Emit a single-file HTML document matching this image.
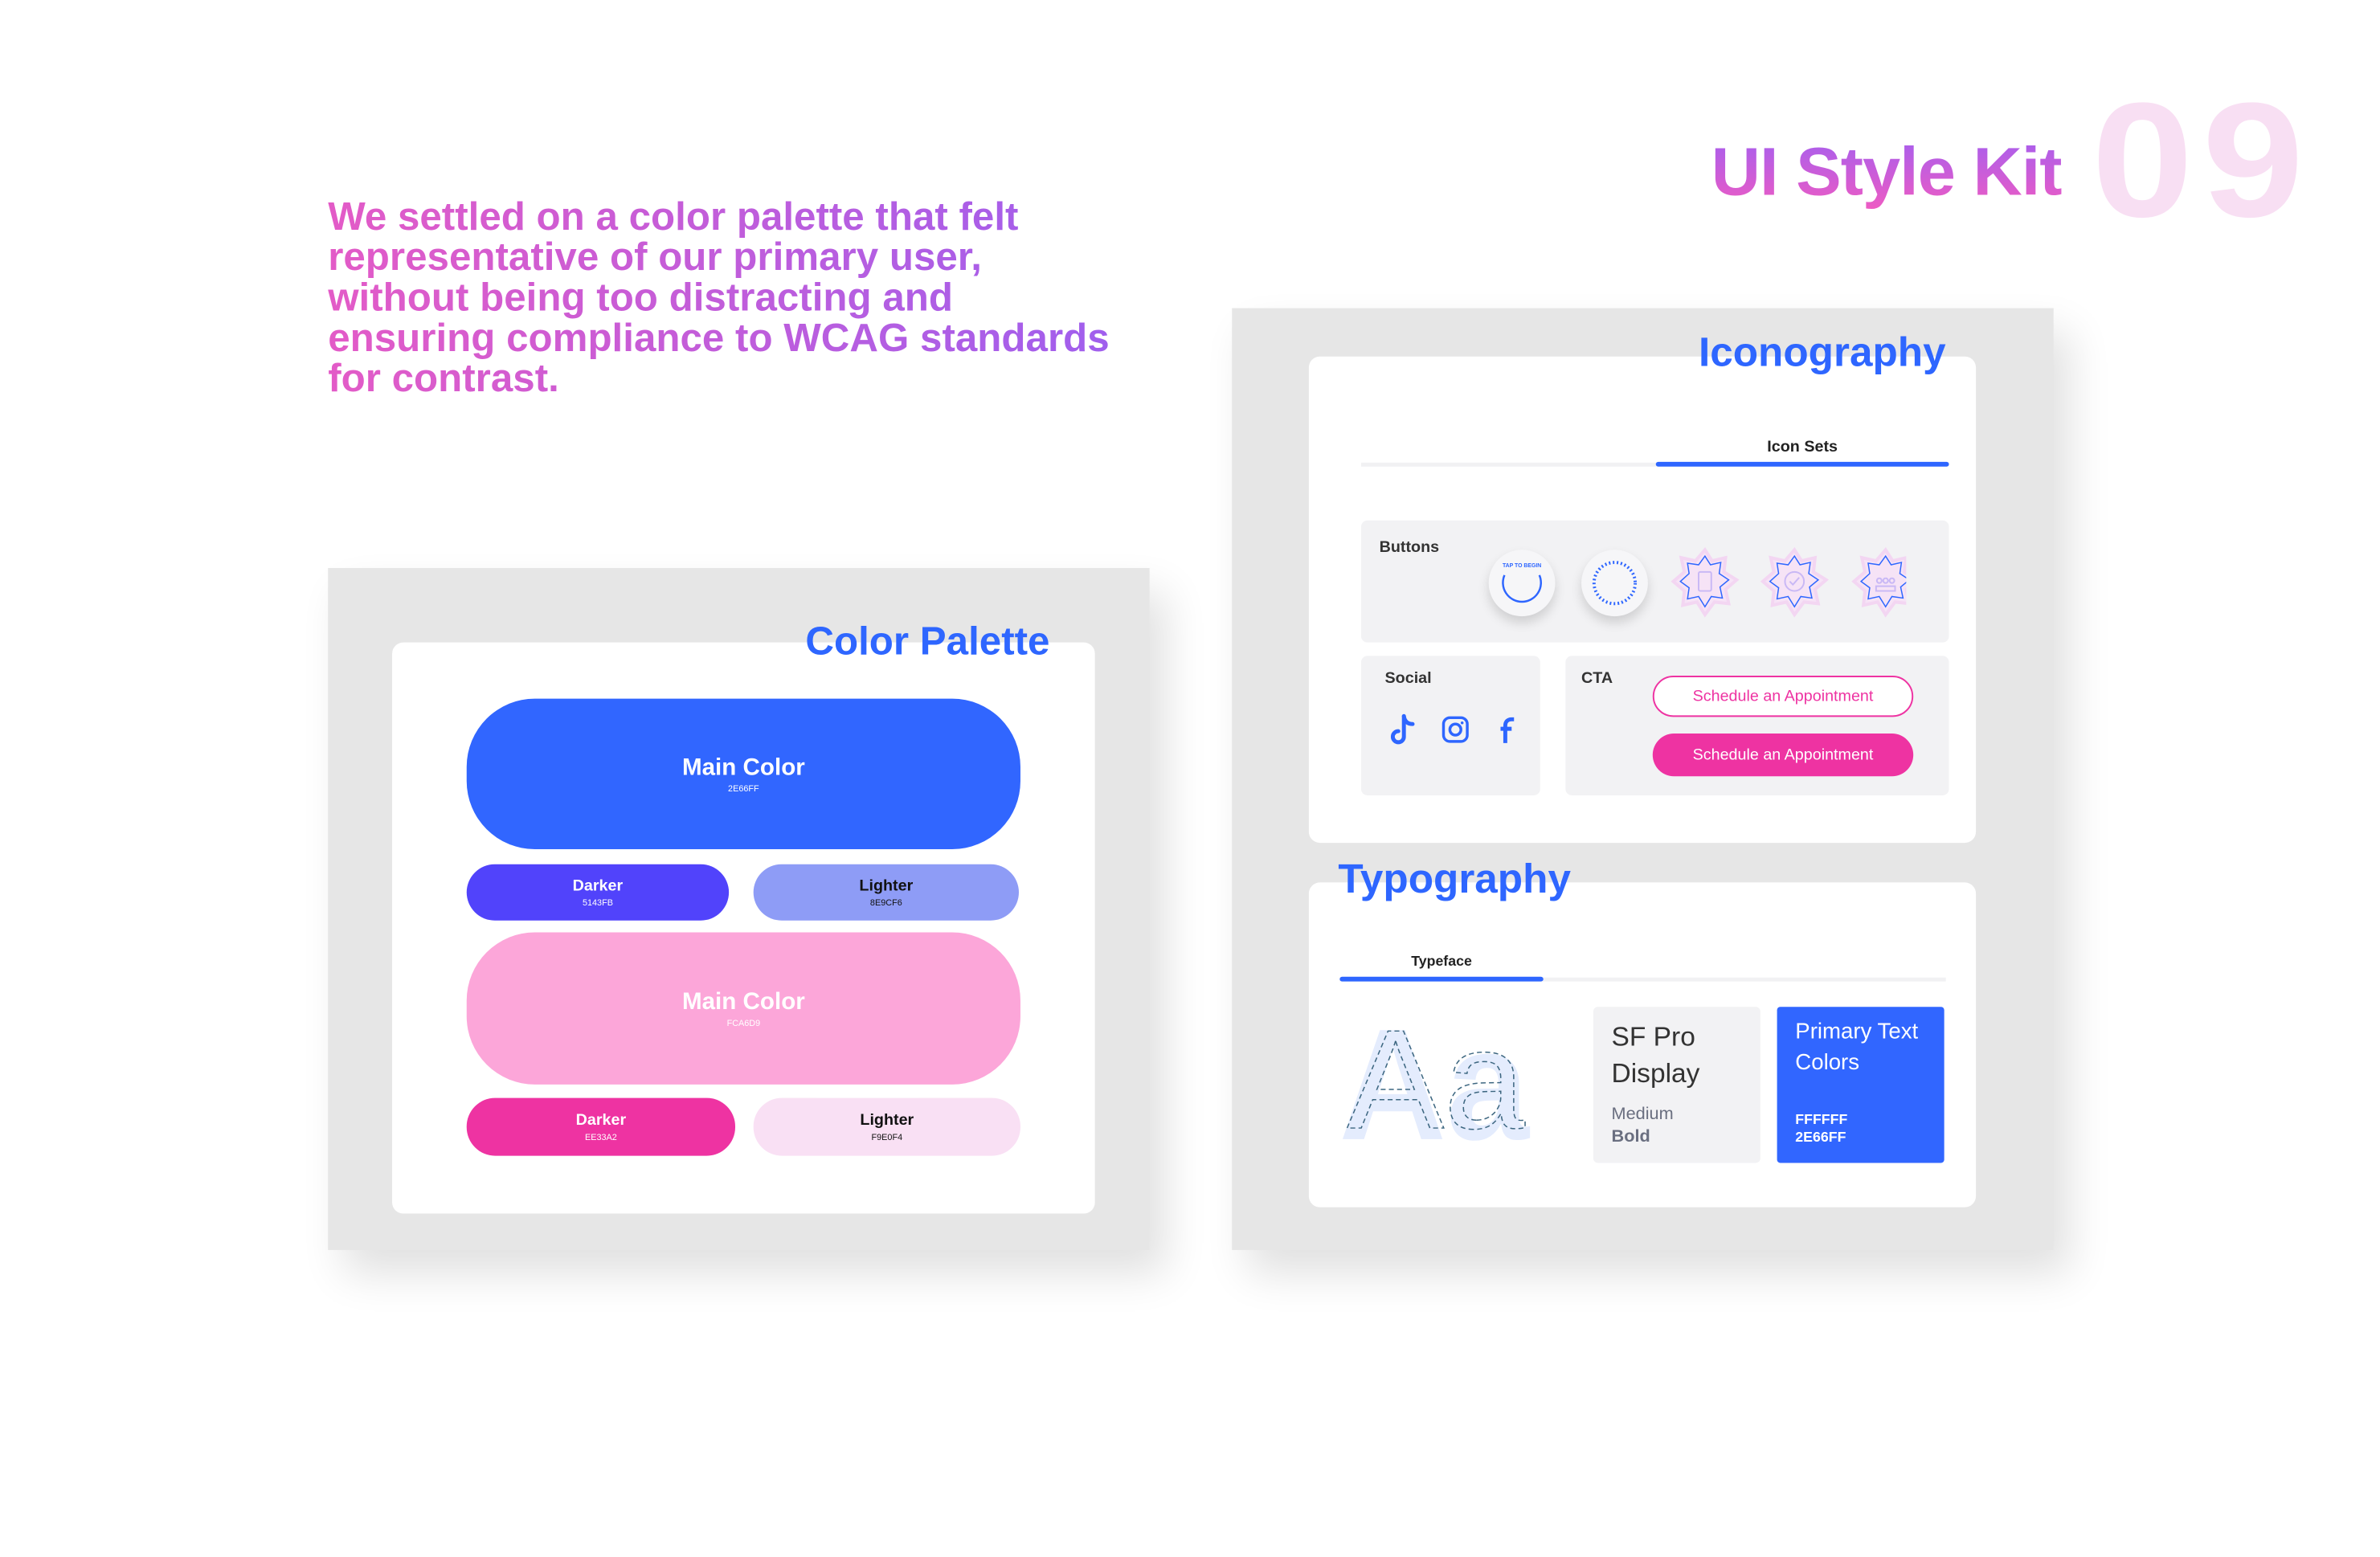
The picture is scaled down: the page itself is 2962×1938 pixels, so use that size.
<!DOCTYPE html>
<html><head><meta charset="utf-8"><style>
*{margin:0;padding:0;box-sizing:border-box}
body{width:2962px;height:1938px;background:#fff;position:relative;overflow:hidden;font-family:"Liberation Sans",sans-serif}
#w{position:absolute;left:0;top:0;width:2962px;height:1938px;transform:scale(0.986);transform-origin:0 0}
.a{position:absolute}
.grad{background:linear-gradient(90deg,#e35bc7,#9b5ff0);-webkit-background-clip:text;background-clip:text;color:transparent}
.panel{background:#e6e6e6;box-shadow:20px 30px 50px rgba(0,0,0,.12)}
.card{background:#fff;border-radius:14px}
.pill{display:flex;flex-direction:column;align-items:center;justify-content:center;font-weight:bold;text-align:center}
.pill small{font-weight:normal;font-size:11px;margin-top:4px}
.gbox{background:#f2f2f4;border-radius:8px}
.lbl{font-weight:bold;font-size:20px;color:#333}
.circ{width:84px;height:84px;border-radius:50%;background:#f6f6f8;box-shadow:0 8px 14px rgba(0,0,0,.15)}
</style></head><body><div id="w">

<div class="a grad" style="left:414px;top:248px;font-size:50px;font-weight:bold;line-height:51px;width:1060px">We settled on a color palette that felt<br>representative of our primary user,<br>without being too distracting and<br>ensuring compliance to <span style="font-weight:900">WCAG</span> standards<br>for contrast.</div>

<div class="a" style="left:2160px;top:168px;font-size:86px;font-weight:bold;background:linear-gradient(180deg,#a35ff0,#f05bc2);-webkit-background-clip:text;background-clip:text;color:transparent;letter-spacing:-1px">UI Style Kit</div>
<div class="a" style="left:2640px;top:82px;font-size:206px;font-weight:bold;color:#f8dff3;line-height:240px;letter-spacing:10px;transform:scaleX(1.12);transform-origin:0 0">09</div>

<div class="a panel" style="left:414px;top:717px;width:1037px;height:861px"></div>
<div class="a card" style="left:495px;top:811px;width:887px;height:721px"></div>
<div class="a" style="left:1000px;top:780px;width:325px;text-align:right;font-size:50px;font-weight:bold;color:#2e66ff">Color Palette</div>
<div class="a pill" style="left:589px;top:882px;width:699px;height:190px;border-radius:86px;background:#3166ff;color:#fff;font-size:30px">Main Color<small>2E66FF</small></div>
<div class="a pill" style="left:589px;top:1091px;width:331px;height:71px;border-radius:36px;background:#5143fb;color:#fff;font-size:20px">Darker<small>5143FB</small></div>
<div class="a pill" style="left:951px;top:1091px;width:335px;height:71px;border-radius:36px;background:#8e9cf6;color:#111;font-size:20px">Lighter<small>8E9CF6</small></div>
<div class="a pill" style="left:589px;top:1177px;width:699px;height:192px;border-radius:86px;background:#fca6d9;color:#fff;font-size:30px">Main Color<small>FCA6D9</small></div>
<div class="a pill" style="left:589px;top:1386px;width:339px;height:73px;border-radius:36px;background:#ee33a2;color:#fff;font-size:20px">Darker<small>EE33A2</small></div>
<div class="a pill" style="left:951px;top:1386px;width:337px;height:73px;border-radius:36px;background:#f9e0f4;color:#111;font-size:20px">Lighter<small>F9E0F4</small></div>

<div class="a panel" style="left:1555px;top:389px;width:1037px;height:1189px"></div>
<div class="a card" style="left:1652px;top:450px;width:842px;height:614px"></div>
<div class="a" style="left:2100px;top:415px;width:356px;text-align:right;font-size:52px;font-weight:bold;color:#2e66ff">Iconography</div>
<div class="a" style="left:1718px;top:584px;width:742px;height:5px;background:#f1f1f3"></div>
<div class="a" style="left:2090px;top:583px;width:370px;height:6px;background:#2e66ff;border-radius:3px"></div>
<div class="a" style="left:2090px;top:553px;width:370px;text-align:center;font-size:20px;font-weight:bold;color:#222">Icon Sets</div>

<div class="a gbox" style="left:1718px;top:657px;width:742px;height:154px"></div>
<div class="a lbl" style="left:1741px;top:680px">Buttons</div>
<div class="a circ" style="left:1879px;top:694px"></div>
<svg class="a" style="left:1879px;top:694px" width="84" height="84"><text x="42" y="22" font-size="7" fill="#2e66ff" text-anchor="middle" font-family="Liberation Sans" font-weight="bold">TAP TO BEGIN</text><path d="M20 32 A24 24 0 1 0 64 32" fill="none" stroke="#2e66ff" stroke-width="2.5"/></svg>
<div class="a circ" style="left:1996px;top:694px"></div>
<svg class="a" style="left:1996px;top:694px" width="84" height="84"><circle cx="42" cy="42" r="26" fill="none" stroke="#2e66ff" stroke-width="4" stroke-dasharray="2 3"/></svg>
<svg class="a" style="left:2106px;top:690px" width="300" height="92">
<g id="s"><polygon points="46,4 55,18 72,14 70,32 86,42 72,54 76,72 58,70 46,86 36,70 18,74 20,56 6,44 20,32 16,14 34,18" fill="#f6e3f6" stroke="#f3d6f2" stroke-width="4"/><polygon points="46,12 53,23 66,20 64,34 76,42 65,51 68,65 54,63 46,76 38,63 24,66 26,52 15,44 26,34 24,21 38,23" fill="none" stroke="#2e66ff" stroke-width="1.5"/></g>
<use href="#s" x="113"/><use href="#s" x="228"/>
<rect x="38" y="32" width="16" height="24" rx="2" fill="none" stroke="#c9b8f5" stroke-width="2"/>
<circle cx="159" cy="44" r="12" fill="none" stroke="#c9b8f5" stroke-width="2"/><path d="M153 44l4 4 8-9" fill="none" stroke="#c9b8f5" stroke-width="2"/>
<path d="M262 50h24v6h-24z M266 40a3 3 0 1 0 .1 0 M274 40a3 3 0 1 0 .1 0 M282 40a3 3 0 1 0 .1 0" fill="none" stroke="#c9b8f5" stroke-width="2"/>
</svg>

<div class="a gbox" style="left:1718px;top:828px;width:226px;height:176px"></div>
<div class="a lbl" style="left:1748px;top:845px">Social</div>
<svg class="a" style="left:1752px;top:898px" width="170" height="50">
<path d="M20 6v26a7 7 0 1 1-7-7" fill="none" stroke="#2e66ff" stroke-width="5" stroke-linecap="round"/><path d="M20 6c1 7 5 10 11 10" fill="none" stroke="#2e66ff" stroke-width="5" stroke-linecap="round"/>
<rect x="70" y="8" width="30" height="30" rx="8" fill="none" stroke="#2e66ff" stroke-width="3.5"/><circle cx="85" cy="23" r="7" fill="none" stroke="#2e66ff" stroke-width="3.5"/><circle cx="93.5" cy="14.5" r="1.8" fill="#2e66ff"/>
<path d="M148 40V18c0-5 3-8 8-8h3M142 22h14" fill="none" stroke="#2e66ff" stroke-width="5"/>
</svg>
<div class="a gbox" style="left:1976px;top:828px;width:484px;height:176px"></div>
<div class="a lbl" style="left:1996px;top:845px">CTA</div>
<div class="a" style="left:2086px;top:853px;width:329px;height:52px;border:2px solid #ee33a2;border-radius:26px;background:#fff;color:#ee33a2;font-size:20px;text-align:center;line-height:48px">Schedule an Appointment</div>
<div class="a" style="left:2086px;top:926px;width:329px;height:54px;border-radius:27px;background:#ee33a2;color:#fff;font-size:20px;text-align:center;line-height:54px">Schedule an Appointment</div>

<div class="a card" style="left:1652px;top:1114px;width:842px;height:410px"></div>
<div class="a" style="left:1689px;top:1080px;font-size:52px;font-weight:bold;color:#2e66ff">Typography</div>
<div class="a" style="left:1691px;top:1234px;width:765px;height:5px;background:#f1f1f3"></div>
<div class="a" style="left:1691px;top:1233px;width:257px;height:6px;background:#2e66ff;border-radius:3px"></div>
<div class="a" style="left:1691px;top:1203px;width:257px;text-align:center;font-size:18px;font-weight:bold;color:#222">Typeface</div>
<svg class="a" style="left:1690px;top:1290px" width="250" height="160">
<text x="0" y="148" font-size="200" font-weight="bold" font-family="Liberation Sans" fill="#e4ecfd" textLength="240" lengthAdjust="spacingAndGlyphs">Aa</text>
<text x="10" y="134" font-size="178" font-family="Liberation Sans" fill="none" stroke="#3c6680" stroke-width="1.5" stroke-dasharray="6 4" textLength="225" lengthAdjust="spacingAndGlyphs">Aa</text>
</svg>
<div class="a" style="left:2011px;top:1271px;width:211px;height:197px;background:#f2f2f4;border-radius:6px"></div>
<div class="a" style="left:2034px;top:1286px;font-size:34px;line-height:46px;color:#333">SF Pro<br>Display</div>
<div class="a" style="left:2034px;top:1392px;font-size:22px;line-height:28px;color:#6a6f80">Medium<br><b>Bold</b></div>
<div class="a" style="left:2243px;top:1271px;width:211px;height:197px;background:#3166ff;border-radius:4px"></div>
<div class="a" style="left:2266px;top:1282px;font-size:28px;line-height:39px;color:#fff">Primary Text<br>Colors</div>
<div class="a" style="left:2266px;top:1402px;font-size:18px;line-height:22px;color:#fff;font-weight:bold">FFFFFF<br>2E66FF</div>
</div></body></html>
